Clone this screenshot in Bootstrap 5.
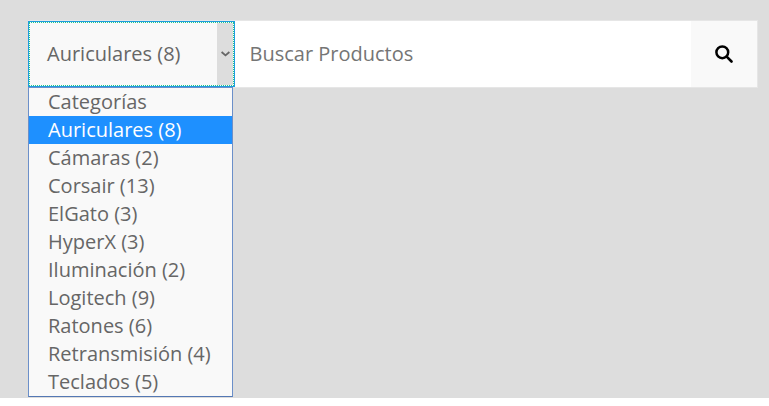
<!DOCTYPE html>
<html lang="es">
<head>
<meta charset="utf-8">
<meta name="viewport" content="width=device-width, initial-scale=1">
<title>Buscar Productos</title>
<link href="https://cdn.jsdelivr.net/npm/bootstrap@5.3.0/dist/css/bootstrap.min.css" rel="stylesheet">
<style>
body{background:#fff;font-family:"Open Sans",sans-serif;font-size:20px;color:#666;overflow:hidden}
.stage{height:398px;background:#ddd;padding:20px 11px 0 28px}
.search-bar{height:68px;border:1px solid #e6e6e6;border-left:0;background:#fff}
.cat-toggle{width:207px;height:66px;background:#f9f9f9;border:1px solid #1e9be0;color:#666;line-height:28px}
.cat-inner{border:1px dotted #22c78a}
.cat-label{padding-left:17px}
.cat-arrow{width:16px;background:#ddd;padding-left:1px}
.cat-menu{width:205px;height:310px;top:66px;left:0;background:#f9f9f9;border:1px solid #6b8fc9;border-bottom-color:#5478b4}
.cat-menu li{height:28px;line-height:28px;padding-left:19px;white-space:nowrap}
.cat-menu li.chosen{background:#1e90ff;color:#fff}
.query,.query:focus{font-size:20px;color:#666;padding:0 14.5px;background:#fff;box-shadow:none}
.query::placeholder{color:#757575;opacity:1}
.go{width:66px;background:#f9f9f9}
</style>
</head>
<body>
<main class="stage">
<form class="search-bar d-flex position-relative">
<button type="button" class="cat-toggle d-flex p-0 flex-shrink-0">
<span class="cat-inner d-flex w-100 h-100">
<span class="cat-label d-flex align-items-center flex-grow-1">Auriculares (8)</span>
<span class="cat-arrow d-flex align-items-center justify-content-center"><svg width="9" height="6" viewBox="0 0 9 6" fill="none" stroke="#666" stroke-width="1.8"><path d="M.6 1l3.9 3.4L8.400 1"/></svg></span>
</span>
</button>
<input class="query form-control border-0 rounded-0 flex-grow-1" type="text" placeholder="Buscar Productos">
<button type="button" class="go border-0 p-0 d-flex align-items-center justify-content-center flex-shrink-0" aria-label="Buscar"><svg width="18" height="18" viewBox="0 0 18 18" fill="none" stroke="#000"><circle cx="7.3" cy="7.3" r="5.9" stroke-width="2.5"/><path d="M11.7 11.7l4.800 4.800" stroke-width="2.6" stroke-linecap="round"/></svg></button>
<ul class="cat-menu list-unstyled position-absolute m-0">
<li>Categorías</li>
<li class="chosen">Auriculares (8)</li>
<li>Cámaras (2)</li>
<li>Corsair (13)</li>
<li>ElGato (3)</li>
<li>HyperX (3)</li>
<li>Iluminación (2)</li>
<li>Logitech (9)</li>
<li>Ratones (6)</li>
<li>Retransmisión (4)</li>
<li>Teclados (5)</li>
</ul>
</form>
</main>
<script src="https://cdn.jsdelivr.net/npm/bootstrap@5.3.0/dist/js/bootstrap.bundle.min.js"></script>
</body>
</html>
